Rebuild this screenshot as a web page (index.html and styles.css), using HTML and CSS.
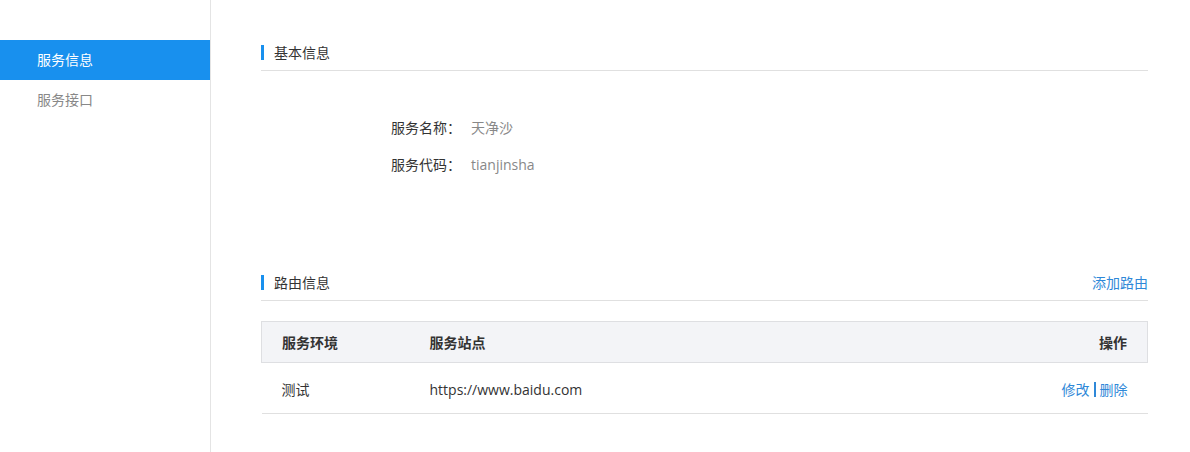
FILE: index.html
```html
<!DOCTYPE html>
<html lang="zh-CN">
<head>
<meta charset="utf-8">
<title>服务信息</title>
<link rel="stylesheet" href="styles.css">
</head>
<body>
<div class="layout">
  <aside class="sidebar">
    <div class="nav-item active">服务信息</div>
    <div class="nav-item">服务接口</div>
  </aside>
  <main class="main">
    <section class="section">
      <div class="sec-head"><span class="sec-title">基本信息</span></div>
      <div class="info">
        <div class="info-row"><span class="info-label">服务名称：</span><span class="info-value">天净沙</span></div>
        <div class="info-row"><span class="info-label">服务代码：</span><span class="info-value">tianjinsha</span></div>
      </div>
    </section>
    <section class="section">
      <div class="sec-head"><span class="sec-title">路由信息</span><a class="link">添加路由</a></div>
      <table class="table">
        <thead>
          <tr><th class="c1">服务环境</th><th class="c2">服务站点</th><th class="c3">操作</th></tr>
        </thead>
        <tbody>
          <tr><td class="c1">测试</td><td class="c2 url">https://www.baidu.com</td><td class="c3"><a class="link">修改</a><span class="sep"></span><a class="link">删除</a></td></tr>
        </tbody>
      </table>
    </section>
  </main>
</div>
</body>
</html>
```
FILE: styles.css
```css
* { box-sizing: border-box; }
html, body { margin: 0; padding: 0; background: #fff; }
body {
  font-family: "Open Sans", "Noto Sans CJK SC", sans-serif;
  font-size: 14px;
  color: #333;
}
.layout { display: flex; min-height: 452px; }
.sidebar {
  width: 211px;
  flex: none;
  border-right: 1px solid #e4e4e4;
  padding-top: 40px;
}
.nav-item {
  height: 40px;
  line-height: 40px;
  padding-left: 37px;
  color: #888;
  font-size: 14px;
}
.nav-item.active { background: #1890ee; color: #fff; }
.main { flex: 1; padding: 0 42px 0 50px; }
.section { padding-top: 43px; }
.section + .section { padding-top: 0; margin-top: 98px; }
.sec-head {
  display: flex;
  justify-content: space-between;
  align-items: center;
  height: 28px;
  line-height: 20px;
  padding-bottom: 7px;
  border-bottom: 1px solid #e0e0e0;
}
.sec-title {
  position: relative;
  padding-left: 13px;
  line-height: 20px;
  color: #333;
}
.sec-title::before {
  content: "";
  position: absolute;
  left: 0;
  top: 2px;
  width: 3px;
  height: 15px;
  background: #1890ee;
}
.link { color: #2f88d8; cursor: pointer; }
.info { padding: 47px 0 0 130px; }
.info-row { line-height: 20px; display: flex; }
.info-row + .info-row { margin-top: 17px; }
.info-label { width: 80px; color: #333; }
.info-value { color: #888; }
.table {
  width: 100%;
  margin-top: 20px;
  border-collapse: collapse;
}
.table th {
  background: #f3f4f7;
  border-top: 1px solid #dedfe2;
  border-bottom: 1px solid #dedfe2;
  height: 41px;
  font-weight: bold;
  text-align: left;
  color: #333;
  padding: 0;
}
.table th.c1 { border-left: 1px solid #dedfe2; }
.table th.c3 { border-right: 1px solid #dedfe2; }
.table td {
  height: 51px;
  border-bottom: 1px solid #e0e0e0;
  padding: 0;
  padding-top: 2px;
  color: #333;
}
.c1 { padding-left: 20px !important; width: 168px; }
.c3 { text-align: right !important; padding-right: 20px !important; }
.url { font-size: 14px; }
.sep {
  display: inline-block;
  width: 2px;
  height: 15px;
  background: #2f88d8;
  margin: 0 4px;
  vertical-align: -2px;
}
```
